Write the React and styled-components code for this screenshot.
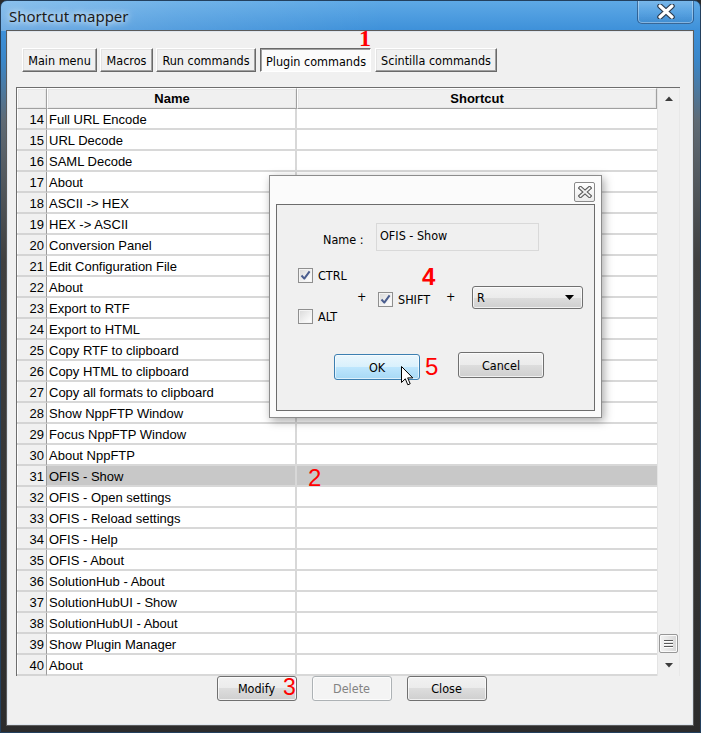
import React from "react";
import styled, { createGlobalStyle } from "styled-components";

const UI = `"DejaVu Sans Condensed", "DejaVu Sans", sans-serif`;
const GRIDF = `"Liberation Sans", Arial, sans-serif`;

const Global = createGlobalStyle`
  html, body { margin: 0; padding: 0; background: #2b2b2b; }
  body { width: 701px; height: 733px; overflow: hidden; }
  * { box-sizing: border-box; }
`;

const Window = styled.div`
  position: relative;
  width: 701px;
  height: 733px;
  display: flex;
  flex-direction: column;
  border: 1px solid #23405e;
  border-radius: 7px 7px 0 0;
  overflow: hidden;
  background: linear-gradient(180deg, #5ea9e6 0px, #3d90d9 30px, #3a86c8 60px, #5f6a74 120px, #404040 260px, #2c2c2c 100%);
`;

const TitleBar = styled.div`
  height: 30px;
  display: flex;
  align-items: flex-start;
  justify-content: space-between;
  background: linear-gradient(90deg, rgba(255,255,255,0.28) 0%, rgba(255,255,255,0.12) 25%, rgba(255,255,255,0) 55%);
`;

const Title = styled.div`
  font: 15px "Noto Sans", "Open Sans", sans-serif;
  color: #1a1a1a;
  padding: 5px 0 0 8px;
  text-shadow: 0 0 6px rgba(255,255,255,0.9), 0 0 10px rgba(255,255,255,0.7);
`;

const CloseBtn = styled.div`
  width: 57px;
  height: 24px;
  margin-right: 6px;
  margin-top: -1px;
  border: 1px solid rgba(20, 50, 90, 0.55);
  border-top: none;
  border-radius: 0 0 5px 5px;
  box-shadow: inset 0 0 0 1px rgba(255,255,255,0.35);
  background: linear-gradient(180deg, rgba(255,255,255,0.18), rgba(255,255,255,0.05) 50%, rgba(0,30,80,0.08));
  display: flex;
  align-items: center;
  justify-content: center;
`;

const Client = styled.div`
  flex: 1;
  margin: 0 7px 7px 6px;
  background: #f0f0f0;
  border: 1px solid #dfe6ee;
  box-shadow: 0 0 0 1px #5b5b5b;
  display: flex;
  flex-direction: column;
  padding: 16px 12px 0 8px;
`;

const TabRow = styled.div`
  display: flex;
  gap: 3px;
  margin-left: 6px;
  height: 24px;
`;

const Tab = styled.div`
  width: ${p => p.$w}px;
  height: 24px;
  margin-right: ${p => p.$mr || 0}px;
  font: 12.5px ${UI};
  color: #000;
  display: flex;
  align-items: center;
  justify-content: center;
  padding-top: ${p => (p.$active ? 2 : 0)}px;
  padding-left: ${p => (p.$active ? 1 : 0)}px;
  white-space: nowrap;
  background: ${p => (p.$active ? "#fbfbfb" : "#f0f0f0")};
  border: 1px solid;
  border-color: ${p => (p.$active ? "#696969 #ffffff #ffffff #696969" : "#ffffff #696969 #696969 #ffffff")};
  box-shadow: ${p => (p.$active ? "inset 1px 1px 0 #a0a0a0" : "inset -1px -1px 0 #a0a0a0, inset 1px 1px 0 #e3e3e3")};
`;

const Grid = styled.div`
  margin-top: 15px;
  height: 589px;
  display: flex;
  border-left: 1px solid #6d6d6d;
  border-top: 1px solid #6d6d6d;
  background: #fff;
`;

const Table = styled.div`
  flex: 1;
  display: flex;
  flex-direction: column;
`;

const Row = styled.div`
  display: grid;
  grid-template-columns: 30px 250px 1fr;
  height: 21px;
`;

const HeadCell = styled.div`
  background: #f0f0f0;
  border: 1px solid;
  border-color: #ffffff #a0a0a0 #a0a0a0 #ffffff;
  box-shadow: inset 0 0 0 1px #e6e6e6;
  font: bold 13px ${GRIDF};
  color: #000;
  text-align: center;
  padding-top: 1px;
  line-height: 18px;
`;

const NumCell = styled.div`
  background: #f0f0f0;
  border-right: 1px solid #9a9a9a;
  border-bottom: 2px solid #d4d4d4;
  box-shadow: inset 1px 0 0 #fff;
  font: 13px ${GRIDF};
  color: #000;
  text-align: right;
  padding: 1px 2px 0 0;
  line-height: 19px;
  overflow: hidden;
`;

const Cell = styled.div`
  background: ${p => (p.$sel ? "#c8c8c8" : "#ffffff")};
  border-bottom: 2px solid #d8d8d8;
  border-right: ${p => (p.$sep ? "2px solid #d8d8d8" : "none")};
  font: 13px ${GRIDF};
  color: #000;
  padding: 1px 0 0 2px;
  line-height: 19px;
  white-space: nowrap;
  overflow: hidden;
`;

const ScrollBar = styled.div`
  width: 23px;
  display: flex;
  flex-direction: column;
  background: #f0f0f0;
  border-left: 1px solid #e4e4e4;
  border-right: 1px solid #e8e8e8;
`;

const ArrowBox = styled.div`
  height: ${p => p.$h}px;
  display: flex;
  align-items: center;
  justify-content: center;
`;

const Track = styled.div`
  flex: 1;
  display: flex;
  flex-direction: column;
  justify-content: flex-end;
  align-items: center;
  padding-bottom: 2px;
`;

const Thumb = styled.div`
  width: 19px;
  height: 19px;
  border: 1px solid #979797;
  border-radius: 2px;
  background: linear-gradient(90deg, #f3f3f3, #e6e6e6 50%, #d6d6d6);
  box-shadow: inset 0 0 0 1px #fafafa;
  display: flex;
  flex-direction: column;
  align-items: center;
  justify-content: center;
  gap: 2px;
`;

const Grip = styled.div`
  width: 9px;
  height: 1px;
  background: #5a5a5a;
  box-shadow: 0 1px 0 #fff;
`;

const ButtonRow = styled.div`
  display: flex;
  justify-content: center;
  gap: 15px;
  padding-left: 7px;
`;

const Btn = styled.div`
  width: ${p => p.$w || 80}px;
  height: ${p => p.$h || 25}px;
  margin-top: ${p => p.$mt || 0}px;
  border: 1px solid ${p => (p.$disabled ? "#adb2b5" : p.$hover ? "#3c7fb1" : "#707070")};
  border-radius: 3px;
  font: 12.5px ${UI};
  color: ${p => (p.$disabled ? "#838383" : "#000")};
  display: flex;
  align-items: center;
  justify-content: center;
  box-shadow: inset 0 0 0 1px ${p => (p.$hover ? "rgba(255,255,255,0.6)" : "rgba(255,255,255,0.7)")};
  background: ${p =>
    p.$disabled
      ? "#f4f4f4"
      : p.$hover
      ? "linear-gradient(180deg, #eaf6fd 0%, #d9f0fc 50%, #bee6fd 50%, #a7d9f5 100%)"
      : "linear-gradient(180deg, #f2f2f2 0%, #ebebeb 50%, #dddddd 50%, #cfcfcf 100%)"};
`;

const Mark = styled.div`
  position: absolute;
  left: ${p => p.$x}px;
  top: ${p => p.$y}px;
  color: #ff0000;
  font: ${p => p.$weight || "normal"} ${p => p.$size}px ${p => (p.$serif ? `"Liberation Serif", serif` : GRIDF)};
  line-height: 1;
  pointer-events: none;
`;

const Dialog = styled.div`
  position: absolute;
  left: 268px;
  top: 174px;
  width: 333px;
  height: 243px;
  border: 1px solid #8c8c8c;
  background: #fbfbfb;
  box-shadow: 2px 3px 9px rgba(0, 0, 0, 0.35);
  display: flex;
  flex-direction: column;
  padding: 0 6px 6px 6px;
`;

const DlgTop = styled.div`
  height: 28px;
  display: flex;
  justify-content: flex-end;
  padding-top: 6px;
`;

const DlgClose = styled.div`
  width: 21px;
  height: 20px;
  border: 1px solid #8a8a8a;
  border-radius: 2px;
  background: linear-gradient(180deg, #ffffff, #ececec);
  display: flex;
  align-items: center;
  justify-content: center;
`;

const Panel = styled.div`
  flex: 1;
  border: 1px solid #6c6c6c;
  background: #f0f0f0;
  display: flex;
  flex-direction: column;
  font: 12.5px ${UI};
  color: #000;
`;

const NameRow = styled.div`
  display: flex;
  align-items: flex-start;
  margin-top: 18px;
  padding-left: 46px;
`;

const Label = styled.div`
  width: 53px;
  padding-top: 9px;
  white-space: nowrap;
`;

const TextBox = styled.div`
  width: 163px;
  height: 28px;
  border: 1px solid #d9d9d9;
  background: #f0f0f0;
  padding: 4px 3px;
  line-height: 16px;
`;

const ModRow = styled.div`
  display: flex;
  align-items: center;
  margin-top: 17px;
  padding-left: 21px;
`;

const ModCol = styled.div`
  width: 59px;
  height: 56px;
  display: flex;
  flex-direction: column;
  justify-content: space-between;
`;

const Check = styled.div`
  display: flex;
  align-items: center;
  gap: 5px;
  width: ${p => p.$w || "auto"}px;
  margin-top: ${p => p.$mt || 0}px;
  white-space: nowrap;
`;

const Box = styled.div`
  width: 15px;
  height: 15px;
  border: 1px solid #8f8f8f;
  background: linear-gradient(135deg, #d8d8d8, #f6f6f6 70%, #ffffff);
  box-shadow: inset 0 0 0 1px #f4f4f4;
  display: flex;
  align-items: center;
  justify-content: center;
`;

const Plus = styled.div`
  width: 8px;
  text-align: center;
  margin-right: ${p => p.$mr}px;
`;

const Combo = styled.div`
  width: 111px;
  height: 23px;
  border: 1px solid #707070;
  border-radius: 3px;
  background: linear-gradient(180deg, #f2f2f2 0%, #ebebeb 50%, #dddddd 50%, #cfcfcf 100%);
  box-shadow: inset 0 0 0 1px rgba(255,255,255,0.7);
  display: flex;
  align-items: center;
  justify-content: space-between;
  padding: 0 8px 0 4px;
  margin-top: 2px;
`;

const BtnRow = styled.div`
  display: flex;
  align-items: flex-start;
  gap: 38px;
  margin-top: 28px;
  padding-left: 57px;
`;

const Cursor = styled.svg`
  position: absolute;
  left: 400px;
  top: 365px;
`;

const rows = [
  "Full URL Encode",
  "URL Decode",
  "SAML Decode",
  "About",
  "ASCII -> HEX",
  "HEX -> ASCII",
  "Conversion Panel",
  "Edit Configuration File",
  "About",
  "Export to RTF",
  "Export to HTML",
  "Copy RTF to clipboard",
  "Copy HTML to clipboard",
  "Copy all formats to clipboard",
  "Show NppFTP Window",
  "Focus NppFTP Window",
  "About NppFTP",
  "OFIS - Show",
  "OFIS - Open settings",
  "OFIS - Reload settings",
  "OFIS - Help",
  "OFIS - About",
  "SolutionHub - About",
  "SolutionHubUI - Show",
  "SolutionHubUI - About",
  "Show Plugin Manager",
  "About",
];

const tabs = [
  { t: "Main menu", w: 75 },
  { t: "Macros", w: 53 },
  { t: "Run commands", w: 100 },
  { t: "Plugin commands", w: 111, active: true },
  { t: "Scintilla commands", w: 122 },
];

const CheckMark = () => (
  <svg width="11" height="11" viewBox="0 0 11 11">
    <path d="M1.5 5.5 L4.3 8.6 L9.6 1.4" fill="none" stroke="#4a5d8e" strokeWidth="2" strokeLinejoin="round" />
  </svg>
);

export default function App() {
  return (
    <>
      <Global />
      <Window>
        <TitleBar>
          <Title>Shortcut mapper</Title>
          <CloseBtn>
            <svg width="18" height="15" viewBox="0 0 18 15">
              <path d="M3 2 L15 13 M15 2 L3 13" stroke="#2c3a4c" strokeWidth="5.5" strokeLinecap="round" />
              <path d="M3 2 L15 13 M15 2 L3 13" stroke="#ffffff" strokeWidth="3.2" strokeLinecap="round" />
            </svg>
          </CloseBtn>
        </TitleBar>
        <Client>
          <TabRow>
            {tabs.map((x, i) => (
              <Tab key={i} $w={x.w} $active={x.active} $mr={i >= 2 ? 1 : 0}>
                {x.t}
              </Tab>
            ))}
          </TabRow>
          <Grid>
            <Table>
              <Row>
                <HeadCell />
                <HeadCell>Name</HeadCell>
                <HeadCell>Shortcut</HeadCell>
              </Row>
              {rows.map((name, i) => {
                const sel = i + 14 === 31;
                return (
                  <Row key={i}>
                    <NumCell>{i + 14}</NumCell>
                    <Cell $sep $sel={sel}>{name}</Cell>
                    <Cell $sel={sel} />
                  </Row>
                );
              })}
            </Table>
            <ScrollBar>
              <ArrowBox $h={20}>
                <svg width="8" height="5" viewBox="0 0 8 5">
                  <path d="M0 5 L4 0.5 L8 5 Z" fill="#3c3c3c" />
                </svg>
              </ArrowBox>
              <Track>
                <Thumb>
                  <Grip />
                  <Grip />
                  <Grip />
                </Thumb>
              </Track>
              <ArrowBox $h={21}>
                <svg width="8" height="5" viewBox="0 0 8 5">
                  <path d="M0 0 L8 0 L4 4.5 Z" fill="#3c3c3c" />
                </svg>
              </ArrowBox>
            </ScrollBar>
          </Grid>
          <ButtonRow>
            <Btn>Modify</Btn>
            <Btn $disabled>Delete</Btn>
            <Btn>Close</Btn>
          </ButtonRow>
        </Client>

        <Dialog>
          <DlgTop>
            <DlgClose>
              <svg width="14" height="12" viewBox="0 0 14 12">
                <path d="M2.5 2 L11.5 10 M11.5 2 L2.5 10" stroke="#5c5c5c" strokeWidth="4" strokeLinecap="square" />
                <path d="M2.5 2 L11.5 10 M11.5 2 L2.5 10" stroke="#f2f2f2" strokeWidth="1.8" strokeLinecap="square" />
              </svg>
            </DlgClose>
          </DlgTop>
          <Panel>
            <NameRow>
              <Label>Name :</Label>
              <TextBox>OFIS - Show</TextBox>
            </NameRow>
            <ModRow>
              <ModCol>
                <Check>
                  <Box><CheckMark /></Box>
                  CTRL
                </Check>
                <Check>
                  <Box />
                  ALT
                </Check>
              </ModCol>
              <Plus $mr={13}>+</Plus>
              <Check $w={68} $mt={6}>
                <Box><CheckMark /></Box>
                SHIFT
              </Check>
              <Plus $mr={18}>+</Plus>
              <Combo>
                <span>R</span>
                <svg width="9" height="5" viewBox="0 0 9 5">
                  <path d="M0 0 L9 0 L4.5 5 Z" fill="#000" />
                </svg>
              </Combo>
            </ModRow>
            <BtnRow>
              <Btn $w={86} $h={26} $mt={2} $hover>OK</Btn>
              <Btn $w={86} $h={26}>Cancel</Btn>
            </BtnRow>
          </Panel>
        </Dialog>

        <Mark $x={358} $y={25} $size={24} $serif $weight="bold">1</Mark>
        <Mark $x={307} $y={465} $size={24}>2</Mark>
        <Mark $x={282} $y={675} $size={23}>3</Mark>
        <Mark $x={421} $y={264} $size={24} $weight="bold">4</Mark>
        <Mark $x={424} $y={354} $size={24}>5</Mark>

        <Cursor width="13" height="21" viewBox="0 0 13 21">
          <path d="M0.5 0.5 L0.5 16.5 L4.3 12.8 L6.8 18.8 L9.2 17.8 L6.7 11.9 L11.8 11.9 Z" fill="#fff" stroke="#000" strokeWidth="1" strokeLinejoin="round" />
        </Cursor>
      </Window>
    </>
  );
}
